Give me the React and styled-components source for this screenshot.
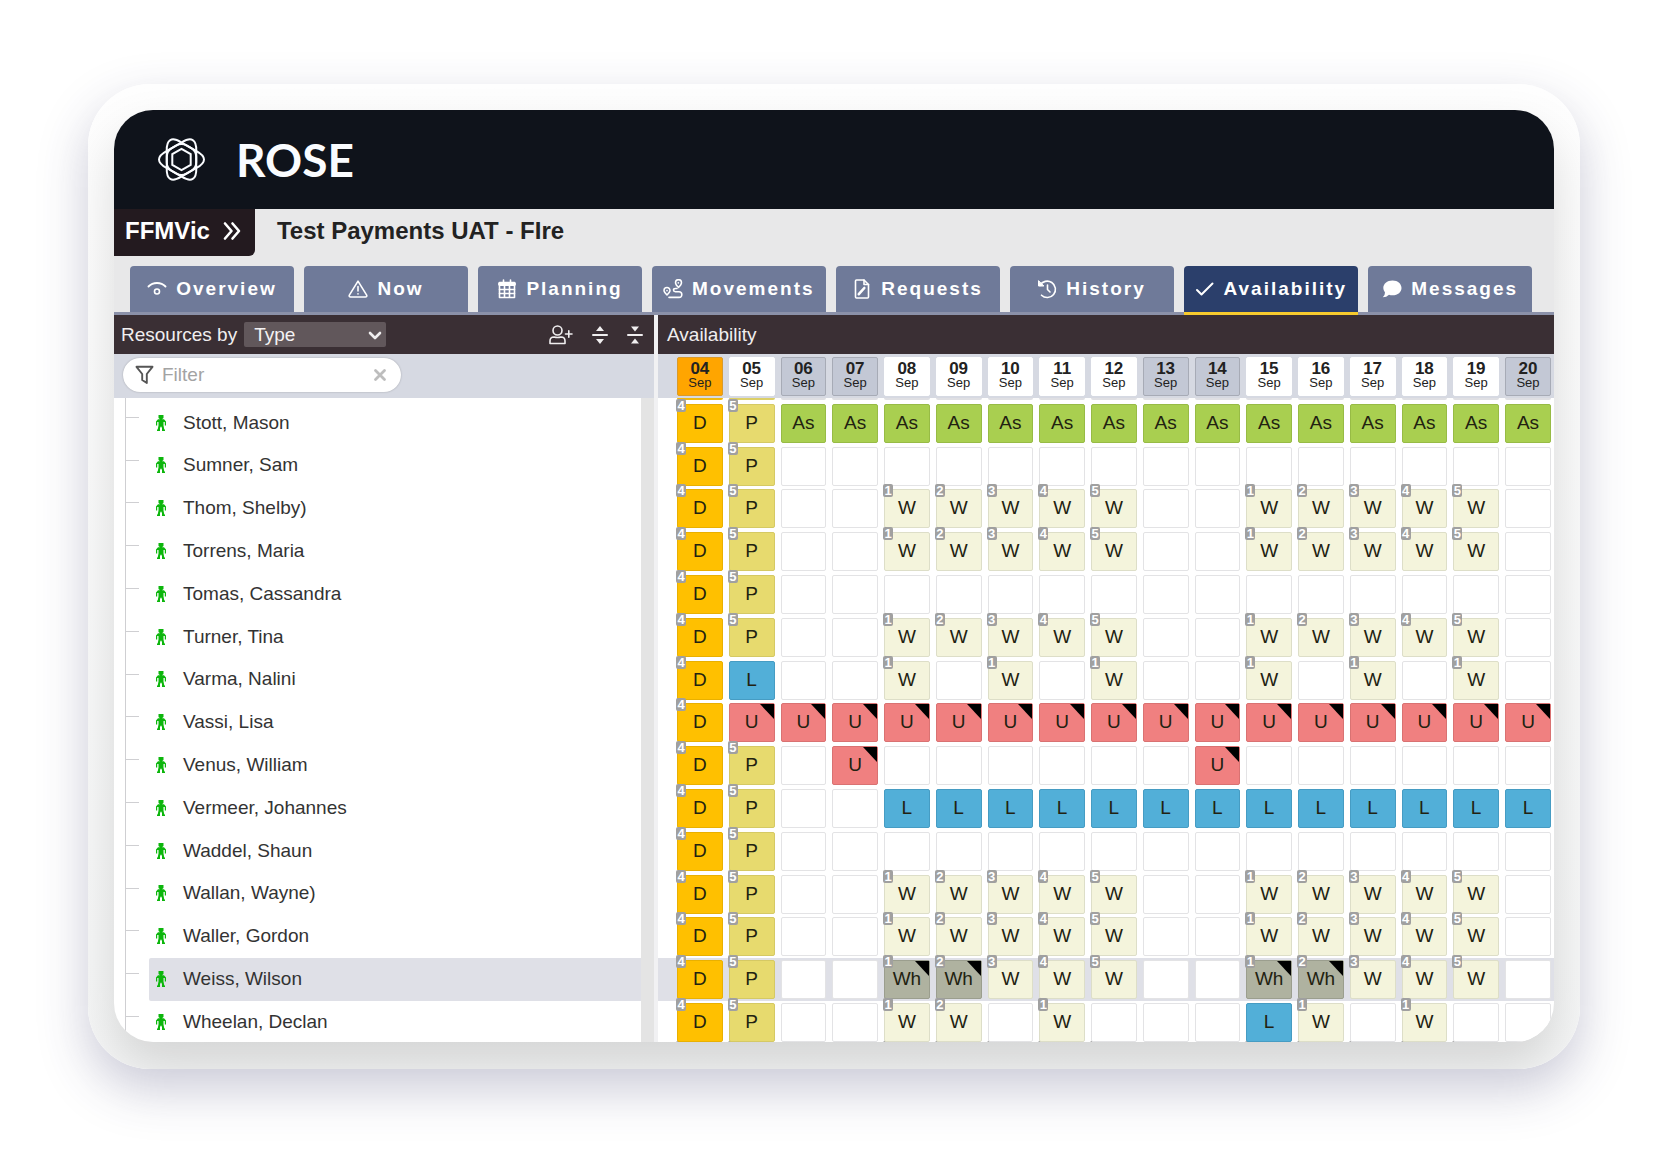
import styled, { createGlobalStyle, ThemeProvider } from "styled-components";

const theme = {
  colors: {
    brand: "#0f131b",
    maroon: "#231a1f",
    bar: "#3a2f34",
    heading: "#e8e8e9",
    tab: "#6f7a99",
    tabActive: "#2b3f6b",
    tabLine: "#8b91a9",
    accent: "#f8cb2e",
    subBar: "#d6d9e2",
    selected: "#dfe0e7",
    track: "#e4e4e4",
    line: "#cfcfd2",
    text: "#333333",
    person: "#0cb60c",
  },
  font: `"Liberation Sans", Arial, sans-serif`,
};

const GlobalStyle = createGlobalStyle`
  *, *::before, *::after { box-sizing: border-box; }

  body {
    margin: 0;
    background: #ffffff;
    font-family: ${theme.font};
    font-size: 19px;
    color: ${theme.colors.text};
  }

  button, input, select { font: inherit; }
`;

const Page = styled.div`
  display: flex;
  height: 100vh;
  padding: 84px 87px 87px 88px;
`;

const Frame = styled.div`
  display: flex;
  flex: 1;
  min-width: 0;
  padding: 26px 26px 27px;
  border-radius: 62px;
  overflow: hidden;
  background: linear-gradient(#fefefe, #f5f6f6);
  box-shadow: 0 20px 50px rgba(50, 50, 100, 0.26);
`;

const Screen = styled.div`
  display: flex;
  flex-direction: column;
  flex: 1;
  min-width: 0;
  border-radius: 39px;
  overflow: hidden;
  background: #ffffff;
  box-shadow: 0 24px 50px rgba(0, 0, 0, 0.14);
`;

const BrandBar = styled.header`
  display: flex;
  flex: none;
  align-items: center;
  gap: 31px;
  height: 99px;
  padding-left: 44px;
  background: ${({ theme }) => theme.colors.brand};
  color: #fafcff;
`;

const BrandName = styled.span`
  font-family: Lato, "Liberation Sans", sans-serif;
  font-size: 46px;
  font-weight: 700;
  line-height: 50px;
`;

const TitleRow = styled.div`
  display: flex;
  flex: none;
  align-items: flex-start;
  gap: 22px;
  height: 57px;
  background: ${({ theme }) => theme.colors.heading};
`;

const RegionButton = styled.button`
  display: flex;
  align-items: center;
  gap: 12px;
  height: 47px;
  padding: 0 13px 4px 11px;
  border: none;
  border-radius: 0 0 6px 0;
  background: ${({ theme }) => theme.colors.maroon};
  color: #ffffff;
  font-size: 24px;
  font-weight: 700;
`;

const Title = styled.h1`
  margin: 0;
  font-size: 24px;
  line-height: 44px;
  color: #222222;
`;

const Tabs = styled.nav`
  display: flex;
  flex: none;
  gap: 10px;
  padding: 0 16px;
  background: linear-gradient(
    ${({ theme }) => theme.colors.heading} 46px,
    ${({ theme }) => theme.colors.tabLine} 46px
  );
`;

const Tab = styled.a`
  display: flex;
  align-items: center;
  justify-content: center;
  gap: 9px;
  min-width: 164px;
  height: 49px;
  padding: 0 11px;
  border-bottom: 3px solid
    ${({ theme, $active }) =>
      $active ? theme.colors.accent : theme.colors.tabLine};
  border-radius: 4px 4px 0 0;
  background: ${({ theme, $active }) =>
    $active ? theme.colors.tabActive : theme.colors.tab};
  color: #ffffff;
  font-weight: 700;
  letter-spacing: 2px;
  text-decoration: none;
  white-space: nowrap;

  svg {
    flex: none;
  }
`;

const Workspace = styled.main`
  display: flex;
  flex: 1;
  min-height: 0;
`;

const ResourcePanel = styled.section`
  display: flex;
  flex: 0 0 540px;
  flex-direction: column;
  min-height: 0;
`;

const RosterPanel = styled.section`
  flex: 1;
  min-width: 0;
  overflow: hidden;
  border-left: 4px solid #f1f1f3;
`;

const PanelBar = styled.div`
  display: flex;
  flex: none;
  align-items: center;
  height: 39px;
  padding: 0 11px 0 7px;
  background: ${({ theme }) => theme.colors.bar};
  color: #f0eeef;
`;

const PanelHeading = styled.h2`
  margin: 0;
  padding-left: 2px;
  font-size: 19px;
  font-weight: 400;
`;

const SelectWrap = styled.div`
  position: relative;
  margin: 0 auto 0 7px;

  svg {
    position: absolute;
    top: 9px;
    right: 4px;
    pointer-events: none;
  }
`;

const GroupSelect = styled.select`
  display: block;
  width: 142px;
  height: 25px;
  padding: 0 10px;
  border: none;
  border-radius: 2px;
  appearance: none;
  background: #61575b;
  color: #f4f2f3;
`;

const BarActions = styled.div`
  display: flex;
  align-items: center;
  gap: 19px;
`;

const IconButton = styled.button`
  display: flex;
  padding: 0;
  border: none;
  background: none;
  color: inherit;
`;

const FilterBar = styled.div`
  flex: none;
  height: 44px;
  padding: 4px 9px;
  background: ${({ theme }) => theme.colors.subBar};
`;

const FilterBox = styled.label`
  display: flex;
  align-items: center;
  gap: 8px;
  width: 278px;
  height: 34px;
  padding: 0 14px 0 12px;
  border-radius: 17px;
  background: #ffffff;
  color: #555555;
  box-shadow: 0 0 2px rgba(0, 0, 0, 0.25);

  button {
    color: #bdbdbd;
  }
`;

const FilterInput = styled.input`
  flex: 1;
  min-width: 0;
  padding: 0;
  border: none;
  outline: none;
  background: none;
  color: ${({ theme }) => theme.colors.text};

  &::placeholder {
    color: #a3a3a3;
    opacity: 1;
  }
`;

const TreeArea = styled.div`
  flex: 1;
  min-height: 0;
  overflow: hidden;
  padding-left: 11px;
  border-right: 13px solid ${({ theme }) => theme.colors.track};
`;

const Tree = styled.ul`
  margin: 0;
  padding: 4px 0 0;
  border-left: 1px solid ${({ theme }) => theme.colors.line};
  list-style: none;
`;

// Every fifth row is a pixel shorter so that the list keeps pace with the
// roster rows beside it.
const TreeItem = styled.li`
  display: flex;
  height: 43px;

  &:nth-child(5n + 2) {
    height: 42px;
  }

  &::before {
    content: "";
    flex: none;
    width: 13px;
    height: 16px;
    margin-right: 10px;
    border-bottom: 1px solid ${({ theme }) => theme.colors.line};
  }
`;

const Person = styled.div`
  display: flex;
  flex: 1;
  align-items: center;
  gap: 17px;
  padding: 0 0 2px 7px;
  border-radius: 2px 0 0 2px;
  background: ${({ theme, $selected }) =>
    $selected ? theme.colors.selected : "transparent"};

  svg {
    color: ${({ theme }) => theme.colors.person};
  }
`;

const Roster = styled.table`
  width: 100%;
  table-layout: fixed;
  border-collapse: collapse;

  th,
  td {
    padding: 0 3px;
    vertical-align: top;
  }
`;

const GutterCol = styled.col`
  width: 16px;
`;

const DayRow = styled.tr`
  height: 44px;
  background: ${({ theme }) => theme.colors.subBar};
`;

const DAY_COLORS = {
  today: { bg: "#ffa500", border: "#d99a2b" },
  weekend: { bg: "#c3c8d5", border: "#a7abb6" },
  weekday: { bg: "#ffffff", border: "#ffffff" },
};

const Day = styled.div`
  height: 39px;
  margin-top: 3px;
  padding-top: 3px;
  border: 1px solid ${({ $kind }) => DAY_COLORS[$kind].border};
  border-radius: 2px;
  background: ${({ $kind }) => DAY_COLORS[$kind].bg};
  color: #222222;
  font-size: 13px;
  font-weight: 400;
  line-height: 12px;
  text-align: center;

  strong {
    display: block;
    font-size: 17px;
    line-height: 16px;
  }
`;

const PeekRow = styled.tr`
  height: 4px;
`;

const PeekCell = styled.div`
  height: 2px;
  border-radius: 0 0 2px 2px;
  background: ${({ $color }) => $color};
`;

const RosterRow = styled.tr`
  height: 43px;
  background: ${({ theme, $selected }) =>
    $selected ? theme.colors.selected : "transparent"};

  &:nth-child(5n + 2) {
    height: 42px;
  }
`;

const SHIFT_COLORS = {
  D: { bg: "#ffc000", border: "#e9b000" },
  P: { bg: "#e7da6e", border: "#d5c964" },
  As: { bg: "#a9cf50", border: "#97bb45" },
  W: { bg: "#f4f4dc", border: "#dddec8" },
  U: { bg: "#f08080", border: "#d97272" },
  L: { bg: "#52afd8", border: "#469cc3" },
  Wh: { bg: "#afb2a0", border: "#9b9e8e" },
  none: { bg: "#ffffff", border: "#e3e3e5" },
};

const Shift = styled.div`
  position: relative;
  height: 39px;
  margin-top: 2px;
  margin-bottom: -2px;
  border: 1px solid ${({ $code }) => SHIFT_COLORS[$code].border};
  border-radius: 2px;
  background: ${({ $code }) => SHIFT_COLORS[$code].bg};
  color: #222211;
  line-height: 35px;
  text-align: center;
`;

const ShiftDay = styled.span`
  position: absolute;
  top: -6px;
  left: -2px;
  width: 10px;
  height: 13px;
  border-radius: 2px;
  background: #a0a0a0;
  color: #ffffff;
  font-size: 13px;
  font-weight: 700;
  line-height: 13px;
`;

const BadgeEdge = styled.div`
  width: 9px;
  height: 4px;
  margin: -3px 0 0 -1px;
  border-radius: 2px 2px 0 0;
  background: #a0a0a0;
`;

const Flag = styled.span`
  position: absolute;
  top: 0;
  right: 0;
  border-top: 15px solid #000000;
  border-left: 14px solid transparent;
`;

const LOOP =
  "M-5-14.1Q0-17 5-14.1L15-8.4C25-3 25 3 15 8.4L5 14.1Q0 17-5 14.1L-15 8.4C-25 3-25-3-15-8.4Z";

function RoseLogo() {
  return (
    <svg width="47" height="47" viewBox="-23.5 -23.5 47 47" fill="none" stroke="currentColor" strokeWidth="2" aria-hidden="true">
      <path d={LOOP} />
      <path d={LOOP} transform="rotate(60)" />
      <path d={LOOP} transform="rotate(120)" />
      <path d="M0-10.6 9.2-5.3V5.3L0 10.6-9.2 5.3V-5.3Z" />
    </svg>
  );
}

function Icon({ width = 20, height = 20, viewBox = "0 0 20 20", children }) {
  return (
    <svg
      width={width}
      height={height}
      viewBox={viewBox}
      fill="none"
      stroke="currentColor"
      strokeWidth="1.6"
      strokeLinecap="round"
      strokeLinejoin="round"
      aria-hidden="true"
    >
      {children}
    </svg>
  );
}

const ChevronsIcon = () => (
  <Icon>
    <path d="M3 2.5 9.5 10 3 17.5M10.5 2.5 17 10 10.5 17.5" strokeWidth="2.6" />
  </Icon>
);

const OverviewIcon = () => (
  <Icon>
    <path d="M1.5 7.5C6 2.8 14 2.8 18.5 7.5" strokeWidth="1.9" />
    <circle cx="10" cy="12.5" r="2.5" />
  </Icon>
);

const WarningIcon = () => (
  <Icon>
    <path d="M10 2.2 18.8 16.3Q19 18 17.5 18H2.5Q1 18 1.2 16.3Z" />
    <path d="M10 7.5V12M10 14.8V15" />
  </Icon>
);

const CalendarIcon = () => (
  <Icon>
    <path d="M2.5 3.5H17.500V18.500H2.500ZM6.500 1V4M13.500 1V4" />
    <path d="M3 5H17" strokeWidth="4" />
    <path d="M2.500 10.500H17.500M2.500 14.500H17.500M7.500 6V18M12.500 6V18" />
  </Icon>
);

const RouteIcon = () => (
  <Icon>
    <path d="M15.500 8.500Q12.500 5.500 12.500 3.700A3 3 0 0 1 18.500 3.700Q18.500 5.500 15.500 8.500Z" strokeWidth="1.5" />
    <path d="M15.300 3.800V4" />
    <path d="M4 16Q1 13 1 11.500A3 3 0 0 1 7 11.500Q7 13 4 16Z" strokeWidth="1.5" />
    <path d="M4 11.500V11.700" />
    <path d="M14 9.500H12.500Q10.500 9.500 10.500 11T12.500 12.800H16Q18.800 12.800 18.800 15.600T16 18.400H6" />
  </Icon>
);

const RequestIcon = () => (
  <Icon viewBox="-2 0 20 20">
    <path d="M1.500 2Q1.500 1 2.500 1H10L14.500 5.500V18Q14.500 19 13.500 19H2.500Q1.500 19 1.500 18Z" />
    <path d="M10 1V5.500H14.500" />
    <path d="M4.800 15.200 10.300 9" strokeWidth="2.6" />
  </Icon>
);

const HistoryIcon = () => (
  <Icon>
    <path d="M3 6.500A8.200 8.200 0 1 1 4.500 16.200" />
    <path d="M1.500 2V7H6.500Z" fill="currentColor" strokeWidth="1" />
    <path d="M10.500 6V10.500L13 13" />
  </Icon>
);

const CheckIcon = () => (
  <Icon>
    <path d="M2 11 6.500 15.500 17.500 4.500" strokeWidth="2" />
  </Icon>
);

const ChatIcon = () => (
  <Icon>
    <path
      d="M10.500 1.500C16 1.500 19.500 5 19.500 9S16 16.300 10.500 16.300Q8.500 16.300 7 15.700Q4.500 18.300 .8 18.300Q3 16.500 3 13.500Q1.300 11.500 1.300 9C1.300 5 5 1.500 10.500 1.500Z"
      fill="currentColor"
      stroke="none"
    />
  </Icon>
);

const AddUserIcon = () => (
  <Icon width={24} viewBox="0 0 24 20">
    <circle cx="8.5" cy="5.5" r="4.5" />
    <path d="M1 18.500V16Q1 12 5 12Q8.500 13 12 12Q16 12 16 16V18.500ZM16.500 9H23M19.800 5.800V12.200" />
  </Icon>
);

const ExpandIcon = () => (
  <Icon width={16} viewBox="0 0 16 20">
    <path d="M1 10H15" strokeWidth="2" />
    <path d="M8 1 12 6H4ZM8 19 12 14H4Z" fill="currentColor" stroke="none" />
  </Icon>
);

const CollapseIcon = () => (
  <Icon width={16} viewBox="0 0 16 20">
    <path d="M1 10H15" strokeWidth="2" />
    <path d="M8 6.500 12 1.500H4ZM8 13.500 12 18.500H4Z" fill="currentColor" stroke="none" />
  </Icon>
);

const FunnelIcon = () => (
  <Icon width={19} viewBox="0 0 19 20">
    <path d="M1.500 1.800H17.500L11.800 9V18L7.200 15V9Z" strokeWidth="1.9" />
  </Icon>
);

const ClearIcon = () => (
  <Icon width={14} height={14} viewBox="0 0 14 14">
    <path d="M2.500 2.500 11.500 11.500M11.500 2.500 2.500 11.500" strokeWidth="2.8" />
  </Icon>
);

const SelectArrow = () => (
  <Icon width={14} height={9} viewBox="0 0 14 9">
    <path d="M2 2 7 7 12 2" strokeWidth="2.6" />
  </Icon>
);

const PersonIcon = () => (
  <svg width="10" height="16" viewBox="0 0 10 16" fill="currentColor" aria-hidden="true">
    <path d="M2.500 0H7.500V3L6 4.200H8L10 6.500V10.500H8.800V7H7.500V10.500L8.300 14.500H9V16H6V13L5 11.200 4 13V16H1V14.500H1.700L2.500 10.500V7H1.200V10.500H0V6.500L2 4.200H4L2.500 3Z" />
  </svg>
);

const TABS = [
  { label: "Overview", Glyph: OverviewIcon },
  { label: "Now", Glyph: WarningIcon },
  { label: "Planning", Glyph: CalendarIcon },
  { label: "Movements", Glyph: RouteIcon },
  { label: "Requests", Glyph: RequestIcon },
  { label: "History", Glyph: HistoryIcon },
  { label: "Availability", Glyph: CheckIcon, active: true },
  { label: "Messages", Glyph: ChatIcon },
];

const WEEKENDS = [6, 7, 13, 14, 20];
const DAYS = Array.from({ length: 17 }, (_, i) => i + 4);

function dayKind(day) {
  if (day === 4) return "today";
  return WEEKENDS.includes(day) ? "weekend" : "weekday";
}

// One token per day from the 4th to the 20th: shift code, optional day-in-block
// number, optional "!" for a flagged entry. "." is an empty day.
const EMPTY = "D4 P5 . . . . . . . . . . . . . . .";
const WEEKS = "D4 P5 . . W1 W2 W3 W4 W5 . . W1 W2 W3 W4 W5 .";

const PEOPLE = [
  { name: "Stott, Mason", shifts: `D4 P5${" As".repeat(15)}` },
  { name: "Sumner, Sam", shifts: EMPTY },
  { name: "Thom, Shelby)", shifts: WEEKS },
  { name: "Torrens, Maria", shifts: WEEKS },
  { name: "Tomas, Cassandra", shifts: EMPTY },
  { name: "Turner, Tina", shifts: WEEKS },
  { name: "Varma, Nalini", shifts: "D4 L . . W1 . W1 . W1 . . W1 . W1 . W1 ." },
  { name: "Vassi, Lisa", shifts: `D4${" U!".repeat(16)}` },
  { name: "Venus, William", shifts: "D4 P5 . U! . . . . . . U! . . . . . ." },
  { name: "Vermeer, Johannes", shifts: `D4 P5 . .${" L".repeat(13)}` },
  { name: "Waddel, Shaun", shifts: EMPTY },
  { name: "Wallan, Wayne)", shifts: WEEKS },
  { name: "Waller, Gordon", shifts: WEEKS },
  {
    name: "Weiss, Wilson",
    shifts: "D4 P5 . . Wh1! Wh2! W3 W4 W5 . . Wh1! Wh2! W3 W4 W5 .",
    selected: true,
  },
  { name: "Wheelan, Declan", shifts: "D4 P5 . . W1 W2 . W1 . . . L W1 . W1 . ." },
];

function ShiftCell({ token }) {
  const [, code, number, flag] = token.match(/^([A-Za-z]*)\.?(\d?)(!?)$/);
  return (
    <td>
      <Shift $code={code || "none"}>
        {code}
        {number && <ShiftDay>{number}</ShiftDay>}
        {flag && <Flag />}
      </Shift>
    </td>
  );
}

function ShiftRow({ shifts, selected }) {
  return (
    <RosterRow $selected={selected}>
      <td />
      {shifts.split(" ").map((token, i) => (
        <ShiftCell key={DAYS[i]} token={token} />
      ))}
    </RosterRow>
  );
}

function Resources() {
  return (
    <ResourcePanel>
      <PanelBar>
        <label htmlFor="group-by">Resources by</label>
        <SelectWrap>
          <GroupSelect id="group-by" defaultValue="type">
            <option value="type">Type</option>
          </GroupSelect>
          <SelectArrow />
        </SelectWrap>
        <BarActions>
          <IconButton type="button" aria-label="Add resource">
            <AddUserIcon />
          </IconButton>
          <IconButton type="button" aria-label="Expand all">
            <ExpandIcon />
          </IconButton>
          <IconButton type="button" aria-label="Collapse all">
            <CollapseIcon />
          </IconButton>
        </BarActions>
      </PanelBar>
      <FilterBar>
        <FilterBox htmlFor="resource-filter">
          <FunnelIcon />
          <FilterInput id="resource-filter" type="text" placeholder="Filter" aria-label="Filter" />
          <IconButton type="button" aria-label="Clear filter">
            <ClearIcon />
          </IconButton>
        </FilterBox>
      </FilterBar>
      <TreeArea>
        <Tree>
          {PEOPLE.map(({ name, selected }) => (
            <TreeItem key={name}>
              <Person $selected={selected}>
                <PersonIcon />
                {name}
              </Person>
            </TreeItem>
          ))}
        </Tree>
      </TreeArea>
    </ResourcePanel>
  );
}

function Availability() {
  return (
    <RosterPanel>
      <PanelBar>
        <PanelHeading>Availability</PanelHeading>
      </PanelBar>
      <Roster>
        <colgroup>
          <GutterCol />
          {DAYS.map((day) => (
            <col key={day} />
          ))}
        </colgroup>
        <thead>
          <DayRow>
            <td />
            {DAYS.map((day) => (
              <th key={day} scope="col">
                <Day $kind={dayKind(day)}>
                  <strong>{String(day).padStart(2, "0")}</strong>
                  Sep
                </Day>
              </th>
            ))}
          </DayRow>
        </thead>
        {/* bottom edge of the row scrolled under the header */}
        <tbody aria-hidden="true">
          <PeekRow>
            <td />
            {DAYS.map((day) => (
              <td key={day}>
                <PeekCell $color={{ 4: "#f0b90f", 5: "#dccf68" }[day] ?? "#dfdfe3"} />
              </td>
            ))}
          </PeekRow>
        </tbody>
        <tbody>
          {PEOPLE.map(({ name, shifts, selected }) => (
            <ShiftRow key={name} shifts={shifts} selected={selected} />
          ))}
        </tbody>
        {/* top edge of the badges in the next row */}
        <tbody aria-hidden="true">
          <PeekRow>
            <td />
            {DAYS.map((day) => (
              <td key={day}>{!WEEKENDS.includes(day) && <BadgeEdge />}</td>
            ))}
          </PeekRow>
        </tbody>
      </Roster>
    </RosterPanel>
  );
}

export default function App() {
  return (
    <ThemeProvider theme={theme}>
      <GlobalStyle />
      <Page>
        <Frame>
          <Screen>
            <BrandBar>
              <RoseLogo />
              <BrandName>ROSE</BrandName>
            </BrandBar>
            <TitleRow>
              <RegionButton type="button">
                FFMVic
                <ChevronsIcon />
              </RegionButton>
              <Title>Test Payments UAT - FIre</Title>
            </TitleRow>
            <Tabs>
              {TABS.map(({ label, Glyph, active }) => (
                <Tab key={label} href="#" $active={active} aria-current={active ? "page" : undefined}>
                  <Glyph />
                  {label}
                </Tab>
              ))}
            </Tabs>
            <Workspace>
              <Resources />
              <Availability />
            </Workspace>
          </Screen>
        </Frame>
      </Page>
    </ThemeProvider>
  );
}
